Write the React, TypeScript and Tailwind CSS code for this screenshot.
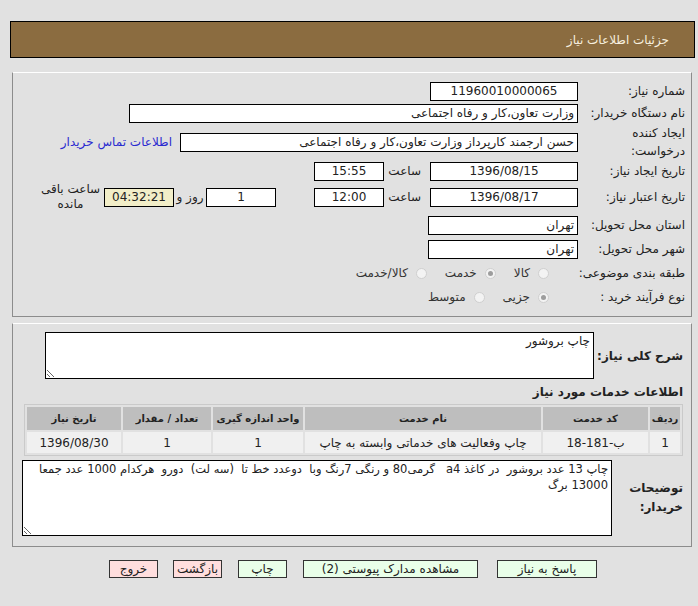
import React from 'react'

function Box({ className = '', bg = 'bg-white', children }: { className?: string; bg?: string; children?: React.ReactNode }) {
  return (
    <div className={`h-[19px] shrink-0 border border-black px-[3px] text-[12px] leading-[17px] whitespace-nowrap overflow-hidden ${bg} ${className}`}>
      {children}
    </div>
  )
}

function Label({ children, className = '' }: { children: React.ReactNode; className?: string }) {
  return <div className={`w-[107px] shrink-0 text-right ${className}`}>{children}</div>
}

function Radio({ checked }: { checked?: boolean }) {
  return (
    <span className="inline-flex h-[11px] w-[11px] items-center justify-center rounded-full border border-[#cfcfcf] bg-[#f3f3f3]">
      {checked && <span className="h-[5px] w-[5px] rounded-full bg-[#9d9d9d]" />}
    </span>
  )
}

function Btn({ className = '', children }: { className?: string; children: React.ReactNode }) {
  return (
    <button className={`h-[18px] shrink-0 border border-[#333] text-[12px] leading-[16px] text-[#222] ${className}`}>
      {children}
    </button>
  )
}

export default function App() {
  return (
    <div dir="rtl" className="min-h-[606px] w-[698px] bg-[#e1e1e1] pt-[21px] font-['Tahoma','DejaVu_Sans',sans-serif] text-[12px] text-[#222]">
      <div className="mr-[3px] ml-[10px] flex h-[37px] items-center border border-black bg-[#8b6c40] pr-[25px] text-[12px] text-[#f7efdf]">
        جزئیات اطلاعات نیاز
      </div>

      {/* panel 1 */}
      <div className="mt-[14px] mr-[6px] ml-[12px] border border-[#8c8c8c] border-t-white pt-[7px] pr-[6px] pb-[8px]">
        <div className="flex h-[22px] items-center">
          <Label>شماره نیاز:</Label>
          <Box className="w-[148px] text-center">11960010000065</Box>
        </div>
        <div className="flex h-[22px] items-center">
          <Label>نام دستگاه خریدار:</Label>
          <Box className="w-[449px]">وزارت تعاون،کار و رفاه اجتماعی</Box>
        </div>
        <div className="flex h-[36px] items-center">
          <Label className="leading-[18px]">
            ایجاد کننده
            <br />
            درخواست:
          </Label>
          <Box className="w-[398px]">حسن ارجمند کارپرداز وزارت تعاون،کار و رفاه اجتماعی</Box>
          <a className="mr-[8px] text-[#2a2ad0]">اطلاعات تماس خریدار</a>
        </div>
        <div className="flex h-[22px] items-center">
          <Label>تاریخ ایجاد نیاز:</Label>
          <Box className="w-[148px] text-center">1396/08/15</Box>
          <div className="w-[46px] shrink-0 pr-[9px] text-right">ساعت</div>
          <Box className="w-[70px] text-center">15:55</Box>
        </div>
        <div className="flex h-[30px] items-center">
          <Label>تاریخ اعتبار نیاز:</Label>
          <Box className="w-[148px] text-center">1396/08/17</Box>
          <div className="w-[46px] shrink-0 pr-[9px] text-right">ساعت</div>
          <Box className="w-[70px] text-center">12:00</Box>
          <div className="w-[38px] shrink-0" />
          <Box className="w-[70px] text-center">1</Box>
          <div className="w-[32px] shrink-0 text-center">روز و</div>
          <Box className="w-[70px] text-center" bg="bg-[#f2eec8]">04:32:21</Box>
          <div className="w-[67px] shrink-0 text-center leading-[15px]">
            ساعت باقی
            <br />
            مانده
          </div>
        </div>
        <div className="flex h-[26px] items-center">
          <Label>استان محل تحویل:</Label>
          <Box className="w-[150px]">تهران</Box>
        </div>
        <div className="flex h-[22px] items-center">
          <Label>شهر محل تحویل:</Label>
          <Box className="w-[150px]">تهران</Box>
        </div>
        <div className="flex h-[26px] items-center">
          <Label>طبقه بندی موضوعی:</Label>
          <div className="flex items-center gap-[8px] pr-[29px] text-[#333]">
            <Radio />
            <span className="ml-[10px]">کالا</span>
            <Radio checked />
            <span className="ml-[10px]">خدمت</span>
            <Radio />
            <span>کالا/خدمت</span>
          </div>
        </div>
        <div className="flex h-[22px] items-center">
          <Label>نوع فرآیند خرید :</Label>
          <div className="flex items-center gap-[8px] pr-[29px] text-[#333]">
            <Radio checked />
            <span className="ml-[10px]">جزیی</span>
            <Radio />
            <span>متوسط</span>
          </div>
        </div>
      </div>

      {/* panel 2 */}
      <div className="mt-[6px] mr-[6px] ml-[12px] border border-[#8c8c8c] border-t-white pt-[8px] pr-[8px] pb-[10px]">
        <div className="flex items-center">
          <div className="w-[89px] shrink-0 whitespace-nowrap text-right text-[12px] font-bold">شرح کلی نیاز:</div>
          <textarea
            readOnly
            dir="rtl"
            className="h-[47px] w-[549px] resize border border-black bg-white px-[3px] text-[12px] leading-[16px] outline-none"
            defaultValue="چاپ بروشور"
          />
        </div>
        <div className="mt-[5px] text-right text-[12px] font-bold leading-[16px]">اطلاعات خدمات مورد نیاز</div>
        <table className="mt-[4px] ml-[11px] w-[659px] border-separate border-spacing-[2px] border border-[#cacaca] text-center">
          <thead>
            <tr className="h-[23px] bg-[#bebebe] text-[10px] font-bold whitespace-nowrap">
              <th className="w-[30px]">ردیف</th>
              <th className="w-[105px]">کد خدمت</th>
              <th className="w-[236px]">نام خدمت</th>
              <th className="w-[90px]">واحد اندازه گیری</th>
              <th className="w-[88px]">تعداد / مقدار</th>
              <th>تاریخ نیاز</th>
            </tr>
          </thead>
          <tbody>
            <tr className="h-[21px] bg-[#f0f0f0] text-[12px]">
              <td>1</td>
              <td>ب-181-18</td>
              <td>چاپ وفعالیت های خدماتی وابسته به چاپ</td>
              <td>1</td>
              <td>1</td>
              <td>1396/08/30</td>
            </tr>
          </tbody>
        </table>
        <div className="mt-[4px] flex items-center">
          <div className="w-[71px] shrink-0 pl-[4px] text-right text-[12px] font-bold leading-[19px]">
            توضیحات
            <br />
            خریدار:
          </div>
          <textarea
            readOnly
            dir="rtl"
            className="h-[76px] w-[590px] resize border border-black bg-white px-[3px] text-[11.5px] leading-[16px] outline-none"
            defaultValue="چاپ 13 عدد بروشور  در کاغذ a4   گرمی80 و رنگی 7رنگ وبا  دوعدد خط تا  (سه لت)  دورو  هرکدام 1000 عدد جمعا 13000 برگ"
          />
        </div>
      </div>

      <div className="mt-[13px] flex pr-[101px]">
        <Btn className="w-[100px] bg-[#e9ffe9]">پاسخ به نیاز</Btn>
        <Btn className="mr-[19px] w-[175px] bg-[#e9ffe9]">مشاهده مدارک پیوستی (2)</Btn>
        <Btn className="mr-[16px] w-[49px] bg-[#e9ffe9]">چاپ</Btn>
        <Btn className="mr-[16px] w-[49px] bg-[#ffdede]">بازگشت</Btn>
        <Btn className="mr-[15px] w-[49px] bg-[#ffdede]">خروج</Btn>
      </div>
    </div>
  )
}
